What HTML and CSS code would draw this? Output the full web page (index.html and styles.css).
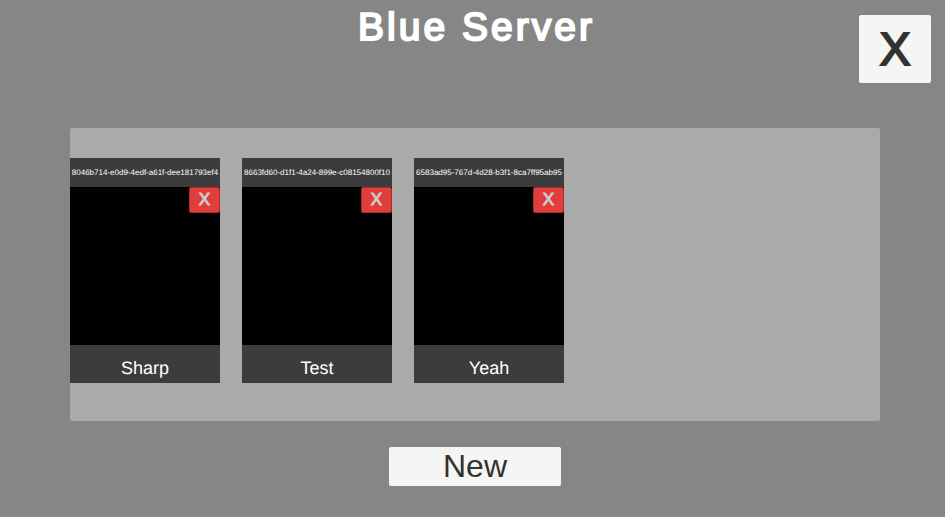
FILE: index.html
```html
<!DOCTYPE html>
<html lang="en">
<head>
<meta charset="utf-8">
<title>Blue Server</title>
<link rel="stylesheet" href="styles.css">
</head>
<body>
<header class="header">
  <h1 class="title">Blue Server</h1>
  <button class="close" type="button" aria-label="Close">X</button>
</header>
<main class="main">
  <ul class="panel">
    <li class="card">
      <p class="card-id">8046b714-e0d9-4edf-a61f-dee181793ef4</p>
      <div class="preview"><button class="remove" type="button" aria-label="Delete Sharp">X</button></div>
      <h2 class="card-name">Sharp</h2>
    </li>
    <li class="card">
      <p class="card-id">8663fd60-d1f1-4a24-899e-c08154800f10</p>
      <div class="preview"><button class="remove" type="button" aria-label="Delete Test">X</button></div>
      <h2 class="card-name">Test</h2>
    </li>
    <li class="card">
      <p class="card-id">6583ad95-767d-4d28-b3f1-8ca7ff95ab95</p>
      <div class="preview"><button class="remove" type="button" aria-label="Delete Yeah">X</button></div>
      <h2 class="card-name">Yeah</h2>
    </li>
  </ul>
  <button class="new" type="button">New</button>
</main>
</body>
</html>
```
FILE: styles.css
```css
* {
  box-sizing: border-box;
}

body {
  margin: 0;
  min-height: 100vh;
  background: #868686;
  font-family: "Liberation Sans", Arial, sans-serif;
  text-rendering: geometricPrecision;
}

.header {
  display: grid;
  grid-template-columns: 1fr auto 1fr;
  align-items: start;
  padding: 15px 14px 0;
}

.title {
  grid-column: 2;
  margin: -8px 0 0;
  padding-left: 8px;
  color: #fff;
  font-size: 39px;
  font-weight: 400;
  line-height: 42px;
  letter-spacing: 3px;
  -webkit-text-stroke: 2px #fff;
}

.close {
  justify-self: end;
  width: 72px;
  height: 68px;
  padding: 0;
  border: 0;
  border-radius: 2px;
  background: #f5f5f3;
  color: #323232;
  font: 46px/68px "Liberation Sans", Arial, sans-serif;
  -webkit-text-stroke: 2px #323232;
}

.main {
  display: flex;
  flex-direction: column;
  align-items: center;
  gap: 26px;
  padding: 45px 65px 31px 70px;
}

.panel {
  display: flex;
  gap: 22px;
  width: 100%;
  margin: 0;
  padding: 30px 0 38px;
  border-radius: 2px;
  background: #aaa;
  list-style: none;
}

.card {
  width: 150px;
  background: #3c3c3c;
  color: #fff;
  text-align: center;
}

.card-id {
  margin: 0;
  font-size: 8px;
  line-height: 29px;
  white-space: nowrap;
}

.preview {
  display: flex;
  justify-content: flex-end;
  align-items: flex-start;
  height: 158px;
  background: #000;
}

.remove {
  width: 31px;
  height: 26px;
  padding: 0;
  border: 1px solid #a92e2e;
  border-radius: 2px;
  background: #e13d3d;
  color: #cecece;
  font: 17px/24px "Liberation Sans", Arial, sans-serif;
  -webkit-text-stroke: 1px #cecece;
}

.card-name {
  margin: 0;
  padding-top: 8px;
  font-size: 18px;
  font-weight: 400;
  line-height: 30px;
}

.new {
  width: 172px;
  height: 39px;
  padding: 0;
  border: 0;
  border-radius: 2px;
  background: #f5f5f3;
  color: #323232;
  font: 32px/39px "Liberation Sans", Arial, sans-serif;
}
```
